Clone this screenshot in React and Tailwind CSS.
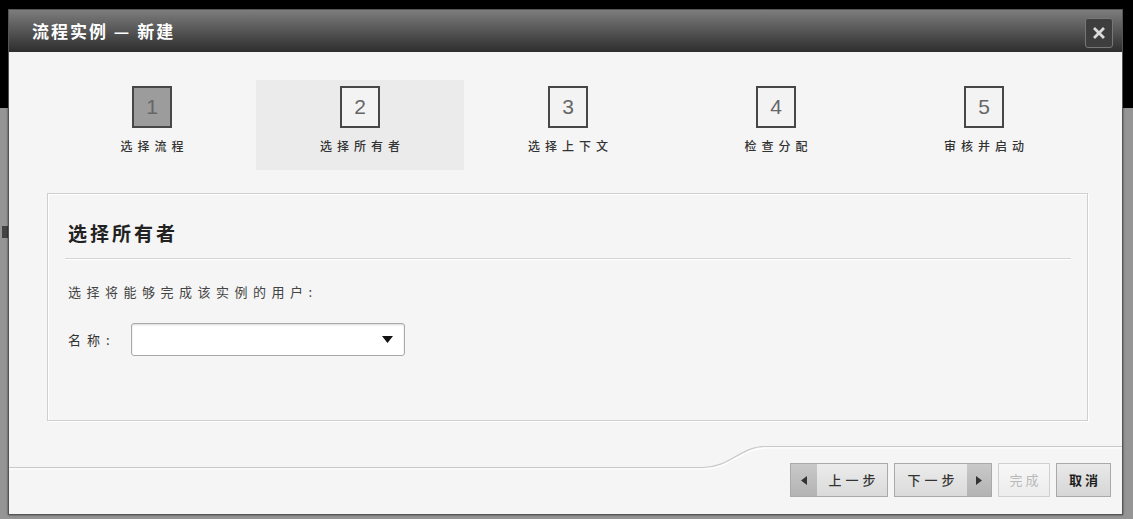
import React from 'react';

const steps = [
  { n: 1, label: '选择流程' },
  { n: 2, label: '选择所有者' },
  { n: 3, label: '选择上下文' },
  { n: 4, label: '检查分配' },
  { n: 5, label: '审核并启动' },
];

const cjk = { fontFamily: '"Noto Sans CJK SC", "Liberation Sans", sans-serif' };

const Step = ({ step, active, done }) => (
  <div className={`flex flex-col items-center w-[208px] h-[90px] pt-[6px] ${active ? 'bg-[#ebebeb]' : ''}`}>
    <div
      className={`w-[40px] h-[42px] border-2 border-[#474747] flex items-center justify-center text-[21px] text-[#666] ${done ? 'bg-[#9c9c9c]' : 'bg-[#f3f3f3]'}`}
      style={{ fontFamily: '"Liberation Sans", Arial, sans-serif' }}
    >
      {step.n}
    </div>
    <div className="mt-[11px] text-[12px] leading-[14px] tracking-[5px] text-[#333] font-medium pl-[5px]" style={cjk}>
      {step.label}
    </div>
  </div>
);

export default function App() {
  return (
    <div className="relative w-[1133px] h-[519px] overflow-hidden bg-[#959595]" style={cjk}>
      {/* page behind the modal */}
      <div className="h-[108px] bg-black" />
      <div className="flex flex-col gap-[40px] pt-[118px] pl-[2px]">
        <div className="w-[6px] h-[12px] bg-[#444]" />
      </div>

      {/* dialog */}
      <div className="absolute left-[8px] top-[9px] w-[1115px] h-[506px] border border-[#555] bg-[#f5f5f5] flex flex-col shadow-[0_0_2px_rgba(0,0,0,0.6)]">
        {/* title bar */}
        <div className="h-[42px] shrink-0 bg-gradient-to-b from-[#7d7d7d] via-[#555] to-[#2e2e2e] flex items-center justify-between pl-[23px] pr-[9px]">
          <div className="text-white font-bold text-[17px] tracking-[2px]">流程实例 — 新建</div>
          <div className="w-[28px] h-[30px] mt-[4px] rounded-[3px] bg-[#3e3e3e] border border-[#777] flex items-center justify-center">
            <svg width="14" height="14" viewBox="0 0 14 14">
              <path d="M3 3 L11 11 M11 3 L3 11" stroke="#dcdcdc" strokeWidth="2.8" strokeLinecap="square" />
            </svg>
          </div>
        </div>

        {/* steps */}
        <div className="flex pl-[39px] mt-[28px]">
          {steps.map((s, i) => (
            <Step key={s.n} step={s} active={i === 1} done={i === 0} />
          ))}
        </div>

        {/* content panel */}
        <div className="ml-[38px] mt-[23px] w-[1041px] h-[228px] border border-[#cfcfcf] shadow-[inset_1px_1px_0_#fff,1px_1px_0_#fff] px-[17px] pt-[27px]">
          <div className="pl-[3px] text-[19px] leading-[24px] font-bold tracking-[3px] text-[#222]">选择所有者</div>
          <div className="mt-[13px] mr-[-1px] h-[2px] border-t border-[#d4d4d4] border-b border-b-white" />
          <div className="mt-[24px] pl-[3px] text-[13px] leading-[16px] tracking-[5.5px] text-[#444]">
            选择将能够完成该实例的用户:
          </div>
          <div className="mt-[23px] flex items-center pl-[3px]">
            <div className="w-[63px] text-[13px] tracking-[6px] text-[#333]">名称:</div>
            <div className="w-[274px] h-[33px] bg-white border border-[#a9a9a9] rounded-[3px] shadow-[inset_0_1px_2px_rgba(0,0,0,0.15)] flex items-center justify-end pr-[11px]">
              <svg width="11" height="7" viewBox="0 0 11 7">
                <path d="M0 0 L11 0 L5.5 7 Z" fill="#111" />
              </svg>
            </div>
          </div>
        </div>

        {/* footer */}
        <div className="relative flex-1">
          <svg className="absolute left-0 top-[25px]" width="1113" height="26" viewBox="0 0 1113 26">
            <path d="M0 21.5 L694 21.5 C720 21.5 732 0.5 756 0.5 L1113 0.5" fill="none" stroke="#c9c9c9" strokeWidth="1.2" />
            <path d="M0 23 L695 23 C721 23 733 2 757 2 L1113 2" fill="none" stroke="#ffffff" strokeWidth="1.2" />
          </svg>
          <div className="flex justify-end gap-[6px] pr-[11px] pt-[42px] text-[13px] leading-[16px]">
            <div className="h-[34px] w-[98px] flex border border-[#a9a9a9] shadow-[inset_0_1px_0_#fff]">
              <div className="w-[26px] bg-gradient-to-b from-[#c9c9c9] to-[#b3b3b3] flex items-center justify-center">
                <svg width="6" height="9" viewBox="0 0 6 9"><path d="M6 0 L0 4.5 L6 9 Z" fill="#333" /></svg>
              </div>
              <div className="flex-1 bg-gradient-to-b from-[#ececec] to-[#dadada] flex items-center justify-center tracking-[4px] pl-[4px] font-medium text-[#333]">
                上一步
              </div>
            </div>
            <div className="h-[34px] w-[98px] flex border border-[#a9a9a9]">
              <div className="flex-1 bg-gradient-to-b from-[#ececec] to-[#dadada] flex items-center justify-center tracking-[4px] pl-[4px] font-medium text-[#333]">
                下一步
              </div>
              <div className="w-[24px] bg-gradient-to-b from-[#c9c9c9] to-[#b3b3b3] flex items-center justify-center">
                <svg width="6" height="9" viewBox="0 0 6 9"><path d="M0 0 L6 4.5 L0 9 Z" fill="#333" /></svg>
              </div>
            </div>
            <div className="h-[34px] w-[52px] border border-[#cfcfcf] bg-gradient-to-b from-[#f7f7f7] to-[#ececec] flex items-center justify-center tracking-[3px] pl-[3px] text-[#b9b9b9]">
              完成
            </div>
            <div className="h-[34px] w-[55px] border border-[#a9a9a9] bg-gradient-to-b from-[#e9e9e9] to-[#d6d6d6] flex items-center justify-center tracking-[3px] pl-[3px] font-bold text-[#1e1e1e]">
              取消
            </div>
          </div>
        </div>
      </div>
    </div>
  );
}
